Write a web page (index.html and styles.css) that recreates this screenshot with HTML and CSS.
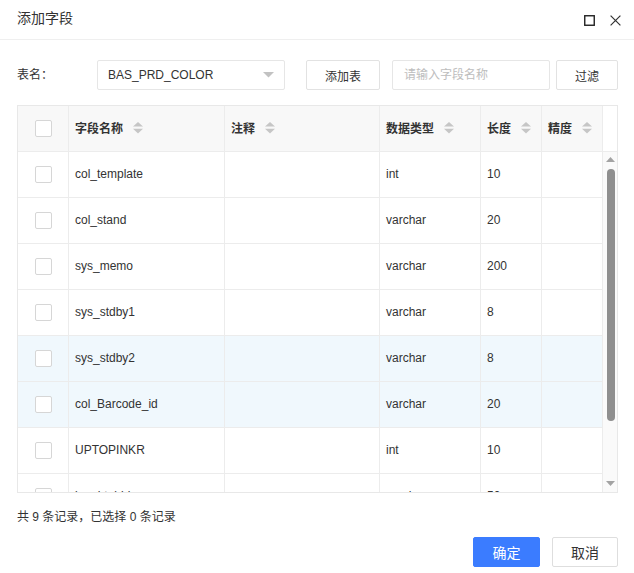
FILE: index.html
```html
<!DOCTYPE html>
<html lang="zh-CN">
<head>
<meta charset="utf-8">
<title>添加字段</title>
<link rel="stylesheet" href="styles.css">
</head>
<body>
<div class="dialog">
  <div class="dlg-head">
    <span class="dlg-title">添加字段</span>
    <div class="dlg-tools">
      <svg class="ico-max" width="11" height="11" viewBox="0 0 11 11"><rect x="0.75" y="0.75" width="9.5" height="9.5" fill="none" stroke="#222" stroke-width="1.4"/></svg>
      <svg class="ico-close" width="11" height="11" viewBox="0 0 11 11"><path d="M0.6 0.6 L10.4 10.4 M10.4 0.6 L0.6 10.4" stroke="#333" stroke-width="1.2" fill="none"/></svg>
    </div>
  </div>
  <div class="dlg-body">
    <div class="toolbar">
      <span class="tb-label">表名：</span>
      <div class="select"><span class="select-text">BAS_PRD_COLOR</span><svg class="caret" width="11" height="6" viewBox="0 0 11 6"><polygon points="0,0 11,0 5.5,5.5" fill="#c2c2c2"/></svg></div>
      <button class="btn tb-add">添加表</button>
      <div class="input">请输入字段名称</div>
      <button class="btn tb-filter">过滤</button>
    </div>

    <div class="grid">
      <div class="grid-head">
        <div class="cell c-chk"><span class="chk"></span></div>
        <div class="cell">字段名称<svg class="sort" width="10" height="12" viewBox="0 0 10 12"><polygon points="0,4.6 5,0 10,4.6" fill="#c6c6c6"/><polygon points="0,6.8 10,6.8 5,11.4" fill="#c6c6c6"/></svg></div>
        <div class="cell">注释<svg class="sort" width="10" height="12" viewBox="0 0 10 12"><polygon points="0,4.6 5,0 10,4.6" fill="#c6c6c6"/><polygon points="0,6.8 10,6.8 5,11.4" fill="#c6c6c6"/></svg></div>
        <div class="cell">数据类型<svg class="sort" width="10" height="12" viewBox="0 0 10 12"><polygon points="0,4.6 5,0 10,4.6" fill="#c6c6c6"/><polygon points="0,6.8 10,6.8 5,11.4" fill="#c6c6c6"/></svg></div>
        <div class="cell">长度<svg class="sort" width="10" height="12" viewBox="0 0 10 12"><polygon points="0,4.6 5,0 10,4.6" fill="#c6c6c6"/><polygon points="0,6.8 10,6.8 5,11.4" fill="#c6c6c6"/></svg></div>
        <div class="cell">精度<svg class="sort" width="10" height="12" viewBox="0 0 10 12"><polygon points="0,4.6 5,0 10,4.6" fill="#c6c6c6"/><polygon points="0,6.8 10,6.8 5,11.4" fill="#c6c6c6"/></svg></div>
        <div class="cell c-gutter"></div>
      </div>
      <div class="grid-body">
        <div class="rows">
          <div class="row"><div class="cell c-chk"><span class="chk"></span></div><div class="cell">col_template</div><div class="cell"></div><div class="cell">int</div><div class="cell">10</div><div class="cell"></div></div>
          <div class="row"><div class="cell c-chk"><span class="chk"></span></div><div class="cell">col_stand</div><div class="cell"></div><div class="cell">varchar</div><div class="cell">20</div><div class="cell"></div></div>
          <div class="row"><div class="cell c-chk"><span class="chk"></span></div><div class="cell">sys_memo</div><div class="cell"></div><div class="cell">varchar</div><div class="cell">200</div><div class="cell"></div></div>
          <div class="row"><div class="cell c-chk"><span class="chk"></span></div><div class="cell">sys_stdby1</div><div class="cell"></div><div class="cell">varchar</div><div class="cell">8</div><div class="cell"></div></div>
          <div class="row row-hl"><div class="cell c-chk"><span class="chk"></span></div><div class="cell">sys_stdby2</div><div class="cell"></div><div class="cell">varchar</div><div class="cell">8</div><div class="cell"></div></div>
          <div class="row row-hl"><div class="cell c-chk"><span class="chk"></span></div><div class="cell">col_Barcode_id</div><div class="cell"></div><div class="cell">varchar</div><div class="cell">20</div><div class="cell"></div></div>
          <div class="row"><div class="cell c-chk"><span class="chk"></span></div><div class="cell">UPTOPINKR</div><div class="cell"></div><div class="cell">int</div><div class="cell">10</div><div class="cell"></div></div>
          <div class="row"><div class="cell c-chk"><span class="chk"></span></div><div class="cell">lenght_bid</div><div class="cell"></div><div class="cell">varchar</div><div class="cell">50</div><div class="cell"></div></div>
          <div class="row"><div class="cell c-chk"><span class="chk"></span></div><div class="cell">sys_status</div><div class="cell"></div><div class="cell">int</div><div class="cell">4</div><div class="cell"></div></div>
        </div>
        <div class="vscroll">
          <svg class="arr" width="9" height="5" viewBox="0 0 9 5"><polygon points="0,5 4.5,0 9,5" fill="#a3a3a3"/></svg>
          <span class="thumb"></span>
          <svg class="arr arr-down" width="9" height="5" viewBox="0 0 9 5"><polygon points="0,0 9,0 4.5,5" fill="#a3a3a3"/></svg>
        </div>
      </div>
    </div>

    <div class="summary">共 9 条记录，已选择 0 条记录</div>
    <div class="footer">
      <button class="btn btn-primary">确定</button>
      <button class="btn btn-cancel">取消</button>
    </div>
  </div>
</div>
</body>
</html>
```

FILE: styles.css
```css
* { box-sizing: border-box; }
html, body { margin: 0; padding: 0; background: #fff; }
body {
  font-family: "Liberation Sans", "Noto Sans CJK SC", sans-serif;
  font-size: 12px;
  color: #333;
}
.dialog { width: 634px; height: 573px; background: #fff; }

.dlg-head {
  height: 40px;
  border-bottom: 1px solid #efefef;
  display: flex;
  align-items: center;
  justify-content: space-between;
  padding: 0 13px 0 17px;
}
.dlg-title { font-size: 14px; line-height: 38px; color: #333; margin-top: -3px; }
.dlg-tools { display: flex; align-items: center; gap: 15px; margin-top: 2px; }
.dlg-tools svg { display: block; }

.dlg-body { padding: 20px 16px 0 17px; }

.toolbar { display: flex; align-items: center; height: 30px; }
.tb-label { width: 80px; line-height: 30px; }
.select {
  width: 188px; height: 30px;
  border: 1px solid #e6e6e6; border-radius: 2px;
  display: flex; align-items: center; justify-content: space-between;
  padding: 0 10px 0 10px;
  margin-right: 21px;
}
.select-text { color: #333; }
.caret { display: block; }
.btn {
  font-family: "Liberation Sans", "Noto Sans CJK SC", sans-serif;
  font-size: 12px; color: #333;
  background: #fff;
  border: 1px solid #e2e2e2; border-radius: 2px;
  height: 30px; padding: 0; cursor: pointer;
}
.tb-add { width: 74px; margin-right: 12px; }
.input {
  width: 158px; height: 30px;
  border: 1px solid #e6e6e6; border-radius: 2px;
  color: #bdbdbd; line-height: 28px; padding-left: 11px;
  margin-right: 6px;
}
.tb-filter { width: 62px; }

.grid {
  margin-top: 15px;
  width: 601px;
  border: 1px solid #e8e8e8;
}
.grid-head, .row {
  display: grid;
  grid-template-columns: 51px 156px 155px 101px 61px 61px;
}
.grid-head { grid-template-columns: 51px 156px 155px 101px 61px 61px 14px; }
.cell {
  height: 46px;
  border-right: 1px solid #ececec;
  border-bottom: 1px solid #ececec;
  display: flex; align-items: center;
  padding: 0 0 2px 6px;
  white-space: nowrap; overflow: hidden;
}
.grid-head .cell { background: #f8f8f8; font-weight: bold; color: #333; }
.grid-head .c-gutter { background: #fff; border-right: none; }
.c-chk { justify-content: center; padding: 0; }
.chk {
  width: 17px; height: 17px;
  border: 1px solid #d6d6d6; border-radius: 2px; background: #fff;
  display: block;
}
.sort { margin-left: 10px; display: block; }

.grid-body { display: flex; height: 340px; }
.rows { width: 585px; height: 340px; overflow: hidden; }
.row-hl .cell { background: #f0f8fd; }

.vscroll {
  width: 14px; height: 340px;
  background: #fafafa;
  display: flex; flex-direction: column; align-items: center;
  padding: 5px 0 6px 1px;
}
.arr { display: block; }
.thumb {
  width: 8px; height: 252px;
  margin-top: 7px;
  background: #8f8f8f;
  border-radius: 4px;
}
.arr-down { margin-top: auto; }

.summary { margin-top: 16px; line-height: 16px; color: #333; }

.footer { display: flex; justify-content: flex-end; gap: 12px; margin-top: 12px; }
.footer .btn { font-size: 14px; height: 30px; }
.btn-primary { width: 67px; background: #3b7cff; border-color: #3b7cff; color: #fff; }
.btn-cancel { width: 66px; border-color: #dedede; }
```
